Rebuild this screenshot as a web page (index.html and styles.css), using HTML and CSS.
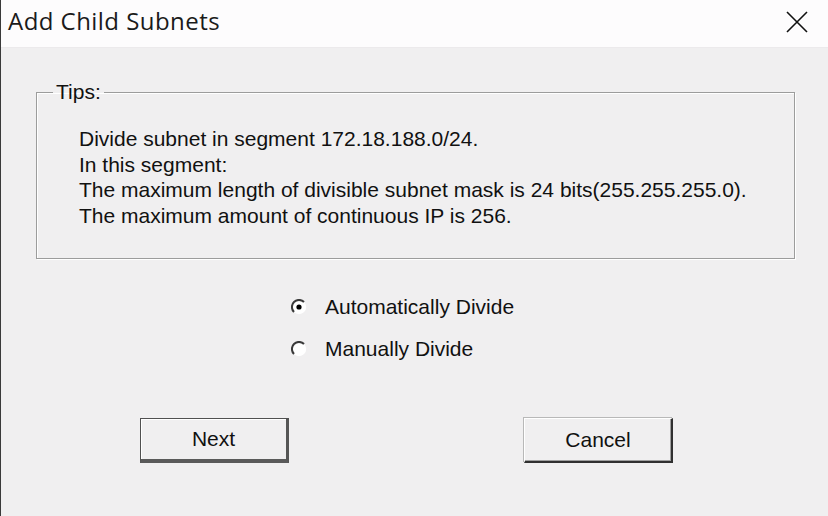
FILE: index.html
```html
<!DOCTYPE html>
<html>
<head>
<meta charset="utf-8">
<link rel="stylesheet" href="styles.css">
</head>
<body>
<div class="dialog">
  <div class="titlebar">
    <span class="title">Add Child Subnets</span>
    <svg class="close" width="24" height="24" viewBox="0 0 24 24"><path d="M2 2 L22 22 M22 2 L2 22" stroke="#111" stroke-width="1.6" fill="none"/></svg>
  </div>
  <div class="content">
    <fieldset class="tips">
      <legend>Tips:</legend>
      <div class="tips-body">
        <div class="line">Divide subnet in segment 172.18.188.0/24.</div>
        <div class="line">In this segment:</div>
        <div class="line">The maximum length of divisible subnet mask is 24 bits(255.255.255.0).</div>
        <div class="line">The maximum amount of continuous IP is 256.</div>
      </div>
    </fieldset>
    <div class="options">
      <div class="radio">
        <svg class="rb" width="16" height="16" viewBox="0 0 16 16"><circle cx="8" cy="8" r="7.2" fill="#fff"/><path d="M3 13 A7 7 0 0 1 13 3" stroke="#3a3a3a" stroke-width="2" fill="none"/><circle cx="8" cy="8" r="2.6" fill="#000"/></svg>
        <span>Automatically Divide</span>
      </div>
      <div class="radio">
        <svg class="rb" width="16" height="16" viewBox="0 0 16 16"><circle cx="8" cy="8" r="7.2" fill="#fff"/><path d="M3 13 A7 7 0 0 1 13 3" stroke="#3a3a3a" stroke-width="2" fill="none"/></svg>
        <span>Manually Divide</span>
      </div>
    </div>
    <div class="buttons">
      <div class="btn default">Next</div>
      <div class="btn">Cancel</div>
    </div>
  </div>
</div>
</body>
</html>
```
FILE: styles.css
```css
html, body {
  margin: 0;
  padding: 0;
}
body {
  width: 828px;
  height: 516px;
  overflow: hidden;
  background: #f0eff0;
}
.dialog {
  width: 828px;
  height: 516px;
  box-sizing: border-box;
  border-left: 1px solid #3a3a3a;
  display: flex;
  flex-direction: column;
  font-family: "Liberation Sans", Arial, sans-serif;
  color: #111;
}
.titlebar {
  height: 47px;
  background: #fdfcfd;
  display: flex;
  align-items: center;
  justify-content: space-between;
  padding: 0 19px 0 7px;
  border-bottom: 1px solid #eceaec;
  flex-shrink: 0;
}
.title {
  font-family: "Open Sans", "Noto Sans", sans-serif;
  font-size: 24px;
  color: #1a1a1a;
  position: relative;
  top: -3px;
  letter-spacing: 0.45px;
}
.close {
  position: relative;
  top: -2px;
}
.content {
  flex: 1;
  display: flex;
  flex-direction: column;
  padding: 32px 0 0 35px;
}
.tips {
  margin: 0;
  width: 759px;
  height: 179px;
  box-sizing: border-box;
  border: 1px solid #9c9c9c;
  box-shadow: inset 1px 1px 0 #fff, 1px 1px 0 #fff;
  padding: 0;
  flex-shrink: 0;
}
.tips legend {
  font-size: 21px;
  padding: 0 3px;
  margin-left: 16px;
  color: #111;
}
.tips-body {
  padding: 22px 0 0 42px;
}
.line {
  font-size: 21px;
  line-height: 25.5px;
}
.options {
  display: flex;
  flex-direction: column;
  padding: 35px 0 0 255px;
  gap: 16px;
}
.radio {
  display: flex;
  align-items: center;
  height: 26px;
  font-size: 21px;
}
.rb {
  margin-right: 18px;
}
.buttons {
  display: flex;
  padding: 56px 0 0 104px;
  gap: 235px;
}
.btn {
  width: 149px;
  height: 45px;
  box-sizing: border-box;
  display: flex;
  align-items: center;
  justify-content: center;
  font-size: 21px;
  background: #f0eff0;
  border-top: 1px solid #ffffff;
  border-left: 1px solid #ffffff;
  border-right: 2px solid #303030;
  border-bottom: 2px solid #303030;
  box-shadow: inset -1px -1px 0 #a0a0a0, -1px -1px 0 #b8b8b8;
}
.btn.default {
  border: 1px solid #505050;
  border-right: 3px solid #555;
  border-bottom: 4px solid #5a5a5a;
  box-shadow: inset 1px 1px 0 #fff;
}
```
